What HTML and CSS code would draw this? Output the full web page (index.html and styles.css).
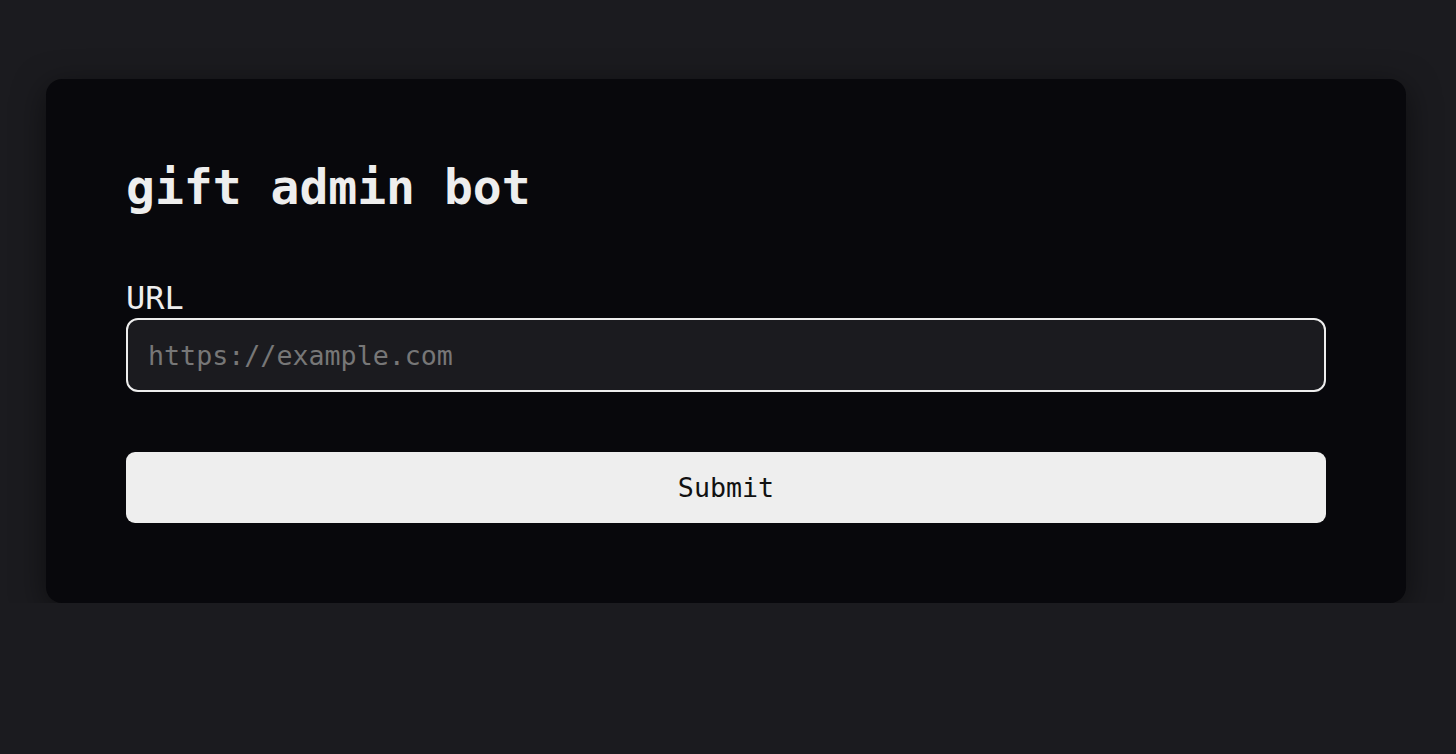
FILE: index.html
```html
<!DOCTYPE html>
<html lang="en">
<head>
<meta charset="utf-8">
<title>gift admin bot</title>
<link rel="stylesheet" href="styles.css">
</head>
<body>
<main class="card">
  <h1 class="title">gift admin bot</h1>
  <form class="form">
    <label class="label" for="url">URL</label>
    <input class="input" id="url" type="text" placeholder="https://example.com">
    <button class="submit" type="button">Submit</button>
  </form>
</main>
</body>
</html>
```

FILE: styles.css
```css
html, body {
  margin: 0;
  padding: 0;
  background: #1b1b1f;
}
body {
  padding: 79px 50px 0 46px;
  font-family: "DejaVu Sans Mono", monospace;
  color: #eeeeee;
}
.card {
  width: 1360px;
  box-sizing: border-box;
  padding: 80px;
  background: #08080c;
  border-radius: 16px;
  box-shadow: 0 8px 32px rgba(0, 0, 0, 0.5);
}
.title {
  margin: 0 0 64px 0;
  font-size: 48px;
  font-weight: bold;
  line-height: normal;
  color: #eeeeee;
}
.form {
  display: flex;
  flex-direction: column;
}
.label {
  font-size: 32px;
  line-height: normal;
  margin-bottom: 1px;
  color: #eeeeee;
}
.input {
  box-sizing: border-box;
  height: 74px;
  padding: 0 20px;
  font-family: "DejaVu Sans Mono", monospace;
  font-size: 26.67px;
  color: #eeeeee;
  background: #1b1b1f;
  border: 2px solid #eeeeee;
  border-radius: 12px;
  outline: none;
}
.input::placeholder {
  color: #777777;
}
.submit {
  box-sizing: border-box;
  margin-top: 60px;
  height: 71px;
  font-family: "DejaVu Sans Mono", monospace;
  font-size: 26.67px;
  color: #111111;
  background: #eeeeee;
  border: none;
  border-radius: 9px;
}
```
